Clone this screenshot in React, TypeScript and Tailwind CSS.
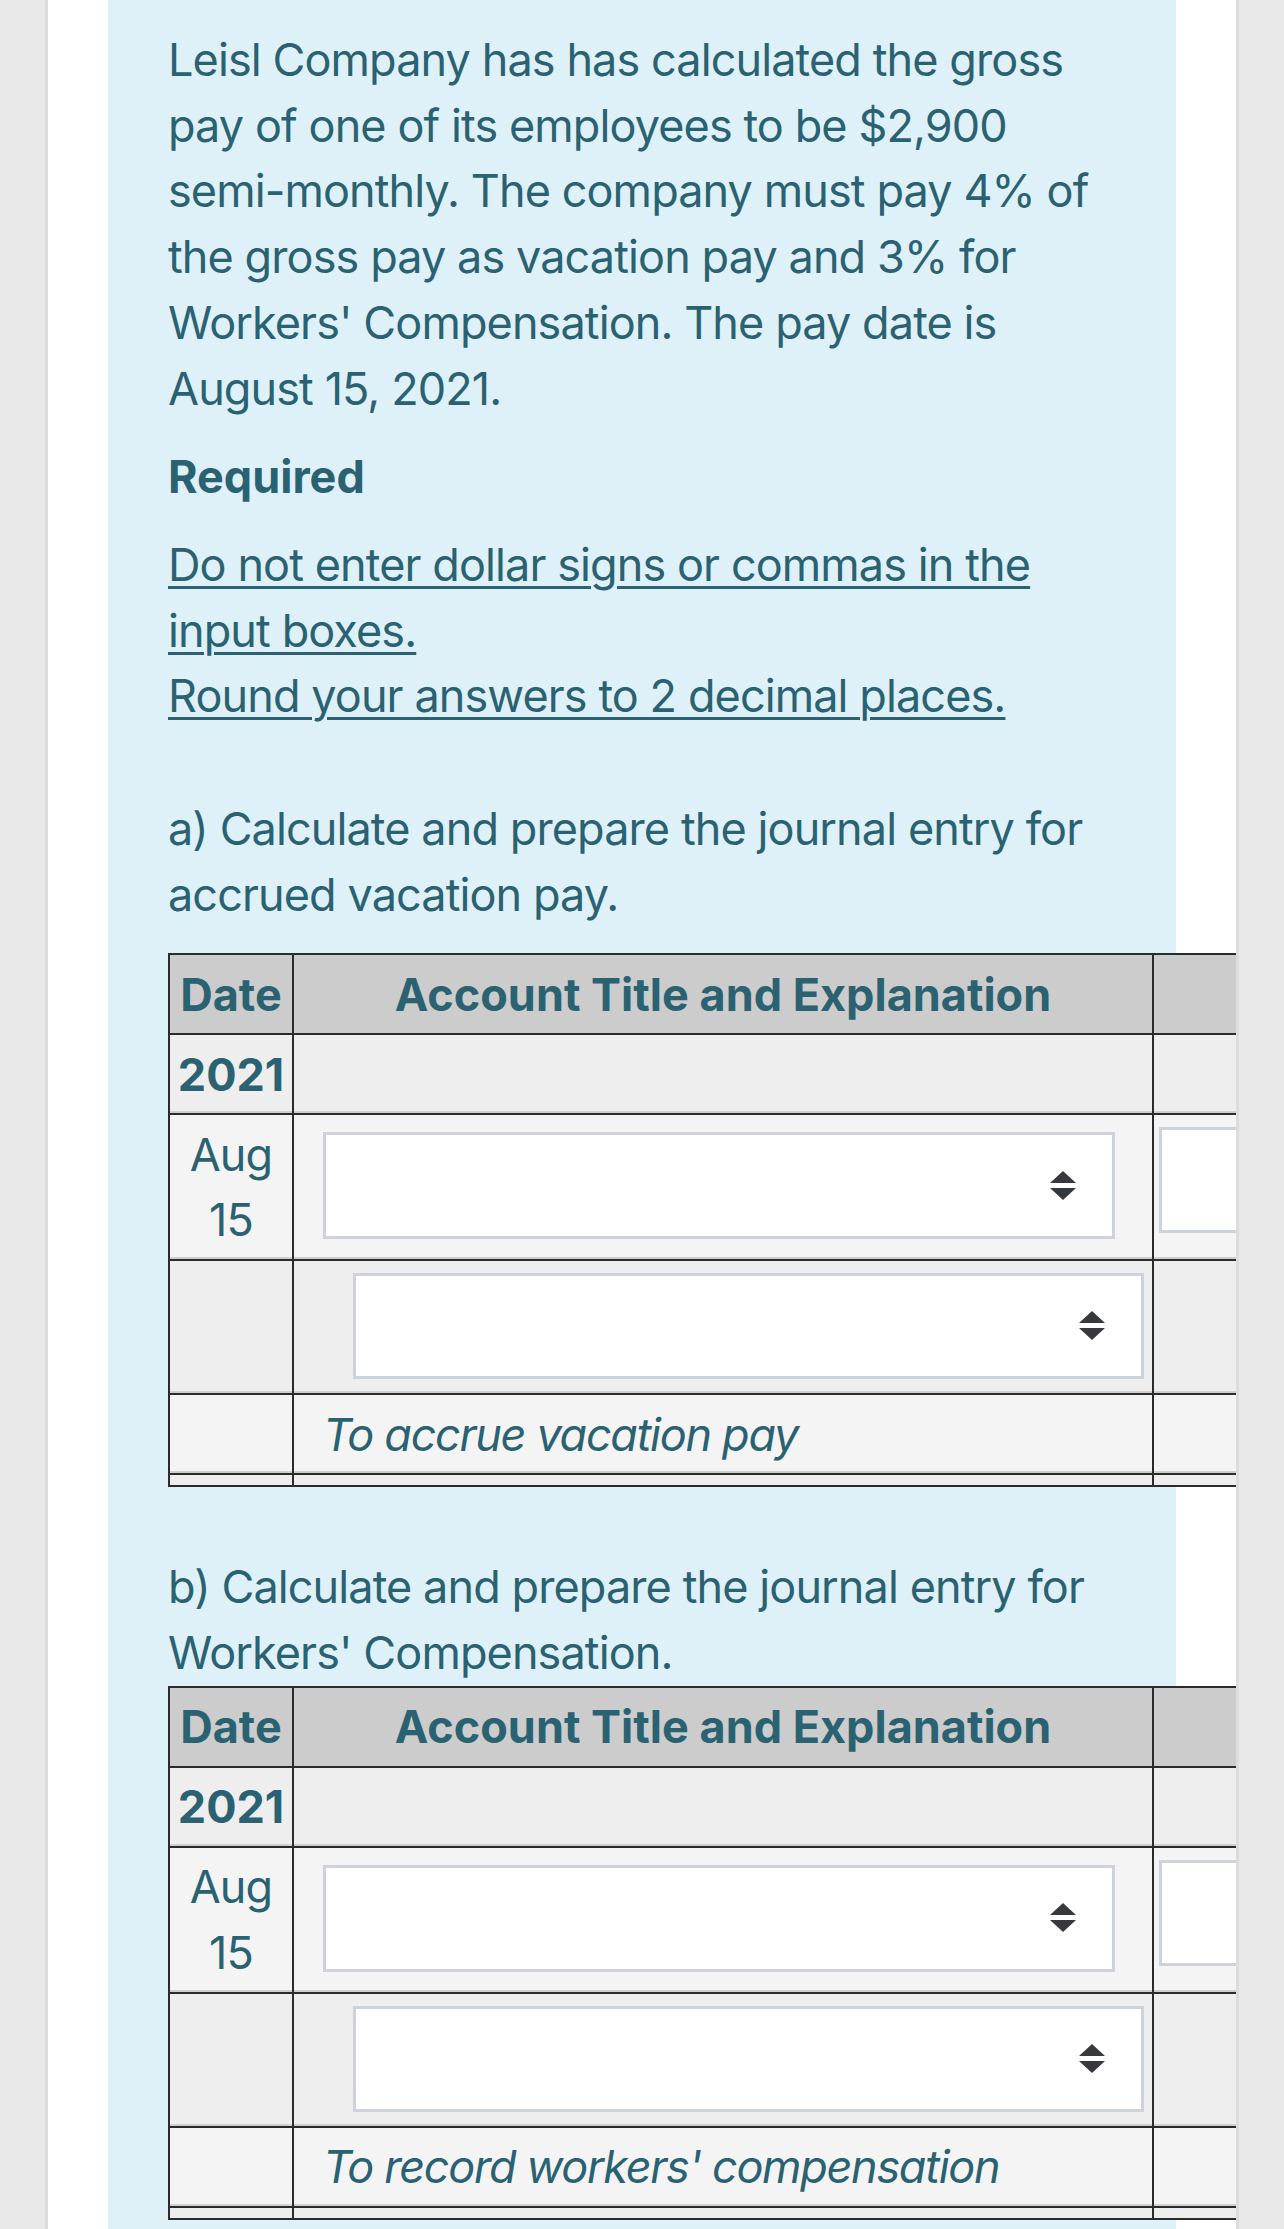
import clsx from 'clsx';

const line = 'border-[#2b2b2b]';
const shade = 'shadow-[inset_0_-2px_0_#cfcfcf]';

function Arrows() {
  return (
    <svg width="26" height="30" viewBox="0 0 26 30" className="shrink-0">
      <polygon points="13,0 26,12 0,12" fill="#373a3c" />
      <polygon points="0,17 26,17 13,29" fill="#373a3c" />
    </svg>
  );
}

function SelectBox({ className }: { className?: string }) {
  return (
    <div className={clsx('flex items-center justify-end border-[3px] border-[#ccd3da] bg-white pr-[36px]', className)}>
      <Arrows />
    </div>
  );
}

function JournalTable({ note }: { note: string }) {
  return (
    <div className={clsx('w-[1600px] border-l-2 border-t-2', line)}>
      {/* header */}
      <div className={clsx('flex h-[80px] border-b-2 bg-[#cccccc] font-bold tracking-normal', line)}>
        <div className={clsx('flex w-[124px] items-center justify-center border-r-2', line)}>Date</div>
        <div className={clsx('flex w-[860px] items-center justify-center border-r-2', line)}>
          Account Title and Explanation
        </div>
        <div className="flex-1" />
      </div>

      {/* year */}
      <div className={clsx('flex h-[80px] border-b-2 bg-[#eeeeee]', line)}>
        <div
          className={clsx('flex w-[124px] items-center justify-center border-r-2 font-bold tracking-normal', line, shade)}
        >
          2021
        </div>
        <div className={clsx('w-[860px] border-r-2', line, shade)} />
        <div className={clsx('flex-1', shade)} />
      </div>

      {/* debit */}
      <div className={clsx('flex h-[146px] border-b-2 bg-[#f4f4f4]', line)}>
        <div className={clsx('flex w-[124px] flex-col items-center justify-center border-r-2', line, shade)}>
          <span>Aug</span>
          <span>15</span>
        </div>
        <div className={clsx('w-[860px] border-r-2 pl-[29px] pt-[17px]', line, shade)}>
          <SelectBox className="h-[107px] w-[792px]" />
        </div>
        <div className={clsx('flex-1 pl-[5px] pt-[12px]', shade)}>
          <div className="h-[106px] w-[400px] border-[3px] border-[#ccd3da] bg-white" />
        </div>
      </div>

      {/* credit */}
      <div className={clsx('flex h-[134px] border-b-2 bg-[#eeeeee]', line)}>
        <div className={clsx('w-[124px] border-r-2', line, shade)} />
        <div className={clsx('w-[860px] border-r-2 pl-[59px] pt-[12px]', line, shade)}>
          <SelectBox className="h-[106px] w-[791px]" />
        </div>
        <div className={clsx('flex-1', shade)} />
      </div>

      {/* explanation */}
      <div className={clsx('flex h-[80px] border-b-2 bg-[#f4f4f4]', line)}>
        <div className={clsx('w-[124px] border-r-2', line, shade)} />
        <div
          className={clsx('flex w-[860px] items-center border-r-2 pl-[29px] italic tracking-[-1.3px]', line, shade)}
        >
          {note}
        </div>
        <div className={clsx('flex-1', shade)} />
      </div>

      <div className={clsx('flex h-[12px] border-b-2 bg-[#eeeeee]', line)}>
        <div className={clsx('w-[124px] border-r-2', line)} />
        <div className={clsx('w-[860px] border-r-2', line)} />
        <div className="flex-1" />
      </div>
    </div>
  );
}

export default function App() {
  return (
    <div className="min-h-screen bg-[#e9e9e9]">
      <div className="mx-[45px] h-[2229px] overflow-hidden border-x-[3px] border-[#dcdcdc] bg-white px-[60px]">
        <div className="h-full bg-[#dff1f8] px-[60px] pt-[27px] font-['Inter',sans-serif] text-[45px] leading-[65.7px] tracking-[-0.9px] text-[#2b6272]">
          <p className="mb-[23px]">
            Leisl Company has has calculated the gross pay of one of its employees to be $2,900 semi-monthly. The
            company must pay 4% of the gross pay as vacation pay and 3% for Workers' Compensation. The pay date is
            August 15, 2021.
          </p>
          <p className="mb-[22px] font-bold tracking-normal">Required</p>
          <p className="mb-[67px] underline decoration-[3px] underline-offset-[5px]">
            Do not enter dollar signs or commas in the input boxes.
            <br />
            Round your answers to 2 decimal places.
          </p>
          <p className="mb-[26px]">a) Calculate and prepare the journal entry for accrued vacation pay.</p>
          <JournalTable note="To accrue vacation pay" />
          <p className="mt-[67px]">b) Calculate and prepare the journal entry for Workers' Compensation.</p>
          <JournalTable note="To record workers' compensation" />
        </div>
      </div>
    </div>
  );
}
